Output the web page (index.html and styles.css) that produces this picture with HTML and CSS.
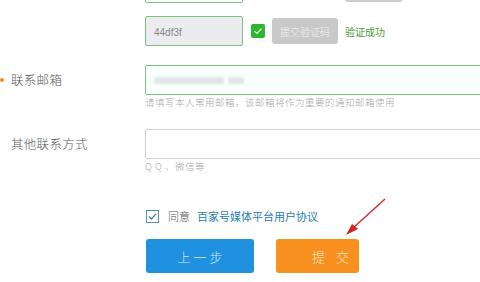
FILE: index.html
```html
<!DOCTYPE html>
<html>
<head>
<meta charset="utf-8">
<link rel="stylesheet" href="styles.css">
</head>
<body>
<div class="page">
  <div class="row row-prev">
    <div class="label"></div>
    <div class="field">
      <div class="line">
        <div class="input small ok"></div>
        <div class="prev-btn"></div>
      </div>
    </div>
  </div>
  <div class="row row-captcha">
    <div class="label"></div>
    <div class="field">
      <div class="line">
        <div class="input small ok gray"><span class="val">44df3f</span></div>
        <span class="check-ok"><svg width="14" height="14" viewBox="0 0 14 14"><rect width="14" height="14" rx="2" fill="#2fb52f"/><path d="M3.5 7.2 L6 9.5 L10.5 4.5" stroke="#d8f5d8" stroke-width="1.2" fill="none"/></svg></span>
        <button class="btn-code">提交验证码</button>
        <span class="success">验证成功</span>
      </div>
    </div>
  </div>
  <div class="row row-email">
    <div class="label"><span class="dot"></span>联系邮箱</div>
    <div class="field">
      <div class="input wide ok light"><span class="blur"></span><span class="blur b2"></span></div>
      <div class="hint">请填写本人常用邮箱，该邮箱将作为重要的通知邮箱使用</div>
    </div>
  </div>
  <div class="row row-other">
    <div class="label">其他联系方式</div>
    <div class="field">
      <div class="input wide plain"></div>
      <div class="hint">Q Q 、微信等</div>
    </div>
  </div>
  <div class="agree">
    <span class="cbox"><svg width="13" height="13" viewBox="0 0 13 13"><rect x="0.5" y="0.5" width="12" height="12" fill="#fff" stroke="#5a8fa8"/><path d="M3 6.5 L5.5 9 L10 3.8" stroke="#3a7fa0" stroke-width="1.2" fill="none"/></svg></span>
    <span class="agree-text">同意</span>
    <a class="agree-link">百家号媒体平台用户协议</a>
  </div>
  <div class="actions">
    <button class="btn btn-prev">上一步</button>
    <button class="btn btn-submit">提 交</button>
  </div>
  <svg class="arrow" width="60" height="50" viewBox="0 0 60 50">
    <line x1="52" y1="4" x2="20" y2="33" stroke="#d42222" stroke-width="1.3"/>
    <path d="M13 40 L25 34 L19 29 Z" fill="#d42222"/>
  </svg>
</div>
</body>
</html>
```

FILE: styles.css
```css
* { box-sizing: border-box; }
html, body { margin: 0; padding: 0; background: #fff; }
body { width: 480px; height: 282px; overflow: hidden; font-family: "Noto Sans CJK SC", "Liberation Sans", sans-serif; font-weight: 300; }
.page { position: relative; margin-top: -27px; }
.row { display: flex; align-items: flex-start; }
.label { width: 145px; flex: none; font-size: 12.5px; color: #555; padding-left: 11px; line-height: 30px; position: relative; letter-spacing: 0.3px; }
.dot { position: absolute; left: 0; top: 13px; width: 4px; height: 4px; border-radius: 50%; background: #f08a2a; }
.field { flex: 1; min-width: 0; }
.line { display: flex; align-items: center; }
.input { height: 30px; border: 1px solid #ccc; border-radius: 2px; position: relative; }
.small { width: 98px; }
.wide { width: 340px; }
.ok { border-color: #7cc27c; }
.gray { background: #ebebf0; }
.light { background: #f9fffc; }
.plain { border-color: #cfcfcf; border-top-color: #d6d6d6; background: #fefefe; }
.val { font-family: "Liberation Sans", sans-serif; font-size: 10px; color: #888; line-height: 28px; padding-left: 8px; }
.prev-btn { width: 58px; height: 29px; margin-left: 102px; background: #ccc; border-radius: 3px; }
.row-prev .line { align-items: flex-start; }
.row-captcha { margin-top: 13px; }
.check-ok { display: flex; margin-left: 8px; }
.btn-code { margin-left: 7px; width: 66px; height: 26px; border: none; border-radius: 3px; background: #c9c9c9; color: #f4f4f4; font-family: inherit; font-weight: 300; font-size: 10px; padding: 0; }
.success { margin-left: 7px; font-size: 10px; color: #4b9b3a; font-weight: 400; }
.row-email { margin-top: 19px; }
.blur { position: absolute; left: 8px; top: 11px; width: 70px; height: 7px; background: #e2e4e6; border-radius: 2px; filter: blur(1px); }
.blur.b2 { left: 82px; width: 16px; }
.hint { font-size: 9.5px; color: #a8a8a8; line-height: 13px; margin-top: 1px; letter-spacing: 0.5px; }
.row-other { margin-top: 20px; }
.agree { display: flex; align-items: center; margin-left: 146px; margin-top: 36px; height: 14px; }
.cbox { display: flex; }
.agree-text { margin-left: 9px; font-size: 11px; color: #555; }
.agree-link { margin-left: 7px; font-size: 11px; color: #2a7db0; font-weight: 400; }
.actions { display: flex; margin-left: 146px; margin-top: 16px; gap: 22px; }
.btn { height: 34px; border: none; border-radius: 3px; font-family: inherit; font-weight: 300; font-size: 13px; padding: 0; white-space: nowrap; }
.btn-prev { width: 108px; background: #1f91df; color: #cfe8fa; letter-spacing: 3px; padding-left: 3px; }
.btn-submit { width: 83px; background: #f8901f; color: #fde6cc; letter-spacing: 4px; text-align: left; padding-left: 36px; }
.arrow { position: absolute; left: 333px; top: 222px; }
```
